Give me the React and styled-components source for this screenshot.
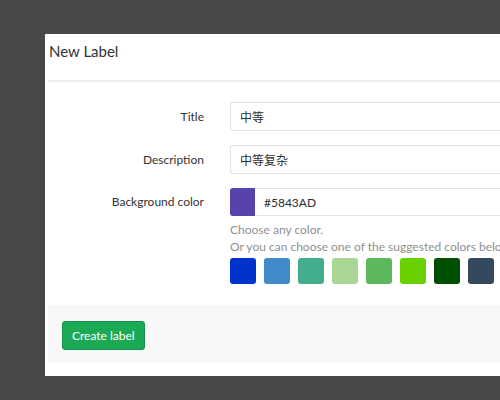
import React from "react";
import styled, { createGlobalStyle } from "styled-components";

const GlobalStyle = createGlobalStyle`
  html, body {
    margin: 0;
    padding: 0;
    background: #484848;
    overflow: hidden;
  }
  body {
    font-family: Lato, "Noto Sans", "Noto Sans CJK SC", sans-serif;
    font-size: 12px;
    color: #2e2e2e;
  }
`;

const suggested = [
  "#0033CC",
  "#428BCA",
  "#44AD8E",
  "#A8D695",
  "#5CB85C",
  "#69D100",
  "#004E00",
  "#34495E",
  "#7F8C8D",
];

const Page = styled.div`
  width: 500px;
  height: 400px;
  padding: 34px 0 0 45px;
  box-sizing: border-box;
  overflow: hidden;
`;

const Modal = styled.div`
  width: 520px;
  background: #fff;
  padding: 0 0 13px 3px;
  box-sizing: border-box;
`;

const Header = styled.div`
  height: 48px;
  padding: 7px 0 0 1px;
  box-sizing: border-box;
  border-bottom: 2px solid #eeeeee;
`;

const Title = styled.h3`
  margin: 0;
  font-size: 15px;
  font-weight: 400;
  line-height: 20px;
  color: #333;
`;

const Body = styled.div`
  padding: 20px 0 22px;
  display: flex;
  flex-direction: column;
  gap: 14px;
`;

const Row = styled.div`
  display: grid;
  grid-template-columns: 156px 1fr;
  column-gap: 26px;
  align-items: start;
`;

const Label = styled.label`
  text-align: right;
  line-height: ${(p) => p.$h || 29}px;
  color: #333;
`;

const Input = styled.div`
  height: ${(p) => p.$h || 29}px;
  border: 1px solid #e3e3e3;
  border-right: none;
  border-radius: 3px 0 0 3px;
  box-sizing: border-box;
  padding: 0 9px;
  display: flex;
  align-items: center;
  color: #2e2e2e;
  font-family: Lato, "Noto Sans CJK SC", sans-serif;
`;

const ColorGroup = styled.div`
  display: flex;
  height: 28px;
`;

const ColorPreview = styled.div`
  width: 25px;
  height: 28px;
  background: ${(p) => p.$color};
  border-radius: 3px 0 0 3px;
  flex: none;
`;

const ColorInput = styled(Input)`
  flex: 1;
  border-radius: 0;
  border-left: none;
`;

const Help = styled.div`
  margin-top: 5px;
  color: #8f8f8f;
  line-height: 17px;
  white-space: nowrap;
`;

const Swatches = styled.div`
  display: flex;
  gap: 8px;
  margin-top: 3px;
`;

const Swatch = styled.div`
  width: 26px;
  height: 26px;
  border-radius: 3px;
  background: ${(p) => p.$color};
  flex: none;
`;

const Footer = styled.div`
  height: 57px;
  background: #f8f8f8;
  border-top: 1px solid #f0f0f0;
  box-sizing: border-box;
  padding: 14px 0 0 14px;
  display: flex;
  align-items: flex-start;
`;

const Button = styled.button`
  height: 29px;
  padding: 0 9px;
  background: #1aaa55;
  border: 1px solid #168f48;
  border-radius: 3px;
  color: #fff;
  font-family: inherit;
  font-size: 12px;
  white-space: nowrap;
  cursor: pointer;
`;

export default function App() {
  return (
    <Page>
      <GlobalStyle />
      <Modal>
        <Header>
          <Title>New Label</Title>
        </Header>
        <Body>
          <Row>
            <Label>Title</Label>
            <Input>中等</Input>
          </Row>
          <Row>
            <Label>Description</Label>
            <Input>中等复杂</Input>
          </Row>
          <Row>
            <Label $h={28}>Background color</Label>
            <div>
              <ColorGroup>
                <ColorPreview $color="#5843AD" />
                <ColorInput $h={28}>#5843AD</ColorInput>
              </ColorGroup>
              <Help>
                Choose any color.
                <br />
                Or you can choose one of the suggested colors below
              </Help>
              <Swatches>
                {suggested.map((c) => (
                  <Swatch key={c} $color={c} />
                ))}
              </Swatches>
            </div>
          </Row>
        </Body>
        <Footer>
          <Button>Create label</Button>
        </Footer>
      </Modal>
    </Page>
  );
}
